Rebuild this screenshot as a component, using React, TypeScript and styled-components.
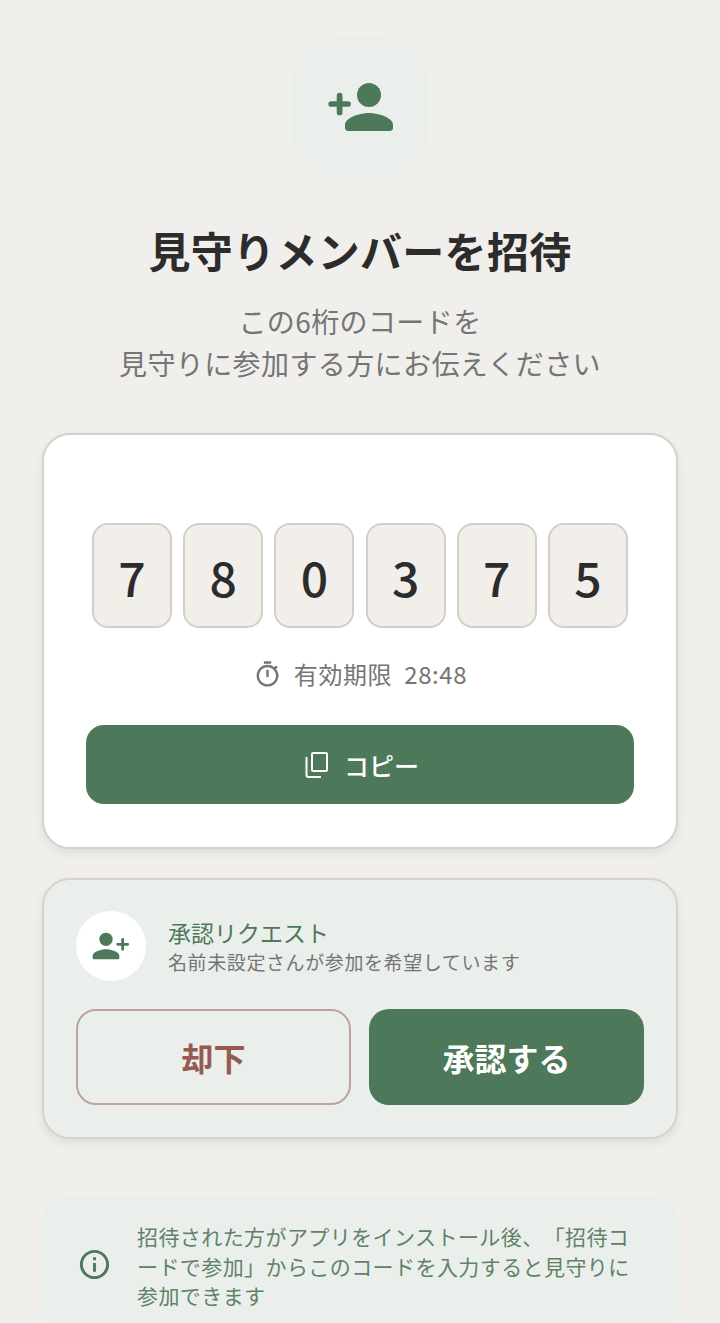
import styled, { createGlobalStyle } from "styled-components";

const GlobalStyle = createGlobalStyle`
  html, body {
    margin: 0;
    padding: 0;
    background: #f0efec;
  }
  * {
    box-sizing: border-box;
  }
`;

const Page = styled.main`
  width: 720px;
  height: 1323px;
  overflow: hidden;
  padding: 37px 42px 0;
  display: flex;
  flex-direction: column;
  align-items: center;
  background: #f0efec;
  font-family: "Noto Sans CJK JP", "Noto Sans", sans-serif;
  color: #2c2c2c;
  text-spacing-trim: space-all;
`;

const IconBadge = styled.div`
  flex: none;
  width: 136px;
  height: 140px;
  border-radius: 44px;
  background: #ebefec;
  display: flex;
  align-items: center;
  justify-content: center;
  color: #4d7859;
`;

const Title = styled.h1`
  margin: 43px 0 0;
  font-size: 42px;
  line-height: 60px;
  font-weight: 700;
  letter-spacing: 0.3px;
  color: #2c2c2c;
`;

const Lead = styled.p`
  margin: 20px 0 0;
  font-size: 28px;
  line-height: 42px;
  letter-spacing: 0.4px;
  text-align: center;
  color: #757575;
`;

const CodeCard = styled.section`
  flex: none;
  width: 636px;
  height: 416px;
  margin-top: 49px;
  padding: 88px 42px 0;
  background: #fff;
  border: 2px solid #d6d2cb;
  border-radius: 28px;
  box-shadow: 0 4px 10px rgba(0, 0, 0, 0.08);
  display: flex;
  flex-direction: column;
  align-items: center;
`;

const Digits = styled.div`
  display: flex;
  gap: 11.2px;
`;

const Digit = styled.div`
  width: 80px;
  height: 105px;
  background: #f2eee9;
  border: 2px solid #d3cfc8;
  border-radius: 16px;
  display: flex;
  align-items: center;
  justify-content: center;
  font-size: 48px;
  font-weight: 500;
  color: #2c2c2c;
`;

const Expiry = styled.div`
  margin-top: 24px;
  display: flex;
  align-items: center;
  gap: 12px;
  font-size: 24px;
  line-height: 44px;
  letter-spacing: 0.6px;
  color: #757575;
`;

const Countdown = styled.span``;

const CopyButton = styled.button`
  flex: none;
  margin-top: 29px;
  width: 548px;
  height: 79px;
  border: none;
  border-radius: 18px;
  background: #4d7859;
  color: #fff;
  font: inherit;
  font-size: 25px;
  font-weight: 500;
  display: flex;
  align-items: center;
  justify-content: center;
  gap: 13px;
`;

const RequestCard = styled.section`
  flex: none;
  width: 636px;
  height: 261px;
  margin-top: 29px;
  padding: 31px 32px;
  background: #ebefec;
  border: 2px solid #d6d2cb;
  border-radius: 28px;
  box-shadow: 0 4px 10px rgba(0, 0, 0, 0.08);
`;

const RequestHead = styled.div`
  display: flex;
  align-items: center;
  gap: 22px;
`;

const Avatar = styled.div`
  width: 70px;
  height: 70px;
  border-radius: 50%;
  background: #fff;
  color: #4d7859;
  display: flex;
  align-items: center;
  justify-content: center;
`;

const RequestTitle = styled.div`
  font-size: 23px;
  line-height: 32px;
  font-weight: 400;
  color: #4d7859;
`;

const RequestText = styled.div`
  font-size: 19px;
  line-height: 28px;
  letter-spacing: 0.6px;
  color: #757575;
`;

const Actions = styled.div`
  margin-top: 28px;
  display: grid;
  grid-template-columns: 1fr 1fr;
  gap: 18px;
`;

const ActionButton = styled.button<{ $primary?: boolean }>`
  height: 96px;
  border-radius: 20px;
  border: ${(p) => (p.$primary ? "none" : "2px solid #c0a29c")};
  background: ${(p) => (p.$primary ? "#4d7859" : "transparent")};
  color: ${(p) => (p.$primary ? "#fff" : "#955a50")};
  font: inherit;
  font-size: 32px;
  font-weight: 700;
`;

const Note = styled.aside`
  flex: none;
  width: 636px;
  margin-top: 58px;
  padding: 25px 35px;
  background: #ebefec;
  border-radius: 20px;
  display: flex;
  align-items: center;
  gap: 25px;
  color: #5f8269;
  font-size: 21px;
  line-height: 29.5px;
  letter-spacing: 0.42px;
`;

const NoteIcon = styled.span`
  flex: none;
  display: flex;
  margin-top: -4px;
  color: #4d7859;
`;

function PersonAddIcon({ size }: { size: number }) {
  return (
    <svg width={size} height={size} viewBox="0 0 24 24" fill="currentColor">
      <circle cx="15" cy="8" r="4" />
      <path d="M15 14c-2.67 0-8 1.34-8 4v1c0 .55.45 1 1 1h14c.55 0 1-.45 1-1v-1c0-2.66-5.33-4-8-4z" />
      <path d="M2.4 11H8M5.2 8.2v5.6" fill="none" stroke="currentColor" strokeWidth="1.9" strokeLinecap="round" />
    </svg>
  );
}

function PersonAddRightIcon({ size }: { size: number }) {
  return (
    <svg width={size} height={size} viewBox="0 0 24 24" fill="currentColor">
      <circle cx="9" cy="8" r="4" />
      <path d="M9 14c-2.67 0-8 1.34-8 4v1c0 .55.45 1 1 1h14c.55 0 1-.45 1-1v-1c0-2.66-5.33-4-8-4z" />
      <path d="M16 11h6M19 8v6" fill="none" stroke="currentColor" strokeWidth="1.7" strokeLinecap="round" />
    </svg>
  );
}

function TimerIcon() {
  return (
    <svg width="29" height="29" viewBox="0 0 24 24" fill="currentColor">
      <path d="M15 1H9v2h6V1zm-4 13h2V8h-2v6zm8.03-6.61l1.42-1.42c-.43-.51-.9-.99-1.41-1.41l-1.42 1.42A8.962 8.962 0 0 0 12 4c-4.97 0-9 4.03-9 9s4.02 9 9 9a8.994 8.994 0 0 0 7.03-14.61zM12 20c-3.87 0-7-3.13-7-7s3.13-7 7-7 7 3.13 7 7-3.13 7-7 7z" />
    </svg>
  );
}

function CopyIcon() {
  return (
    <svg width="30" height="30" viewBox="0 0 24 24" fill="none" stroke="currentColor" strokeWidth="1.6">
      <rect x="8.8" y="2.4" width="12" height="14.4" rx="0.8" />
      <path d="M4.4 5.6v14.4a1.6 1.6 0 0 0 1.6 1.6h10" />
    </svg>
  );
}

function InfoIcon() {
  return (
    <svg width="35" height="35" viewBox="0 0 24 24" fill="currentColor">
      <path d="M11 7h2v2h-2zm0 4h2v6h-2zm1-9C6.48 2 2 6.48 2 12s4.48 10 10 10 10-4.48 10-10S17.52 2 12 2zm0 18c-4.41 0-8-3.59-8-8s3.59-8 8-8 8 3.59 8 8-3.59 8-8 8z" />
    </svg>
  );
}

const code = ["7", "8", "0", "3", "7", "5"];

export default function App() {
  return (
    <>
      <GlobalStyle />
      <Page>
        <IconBadge>
          <PersonAddIcon size={72} />
        </IconBadge>
        <Title>見守りメンバーを招待</Title>
        <Lead>
          この6桁のコードを
          <br />
          見守りに参加する方にお伝えください
        </Lead>

        <CodeCard>
          <Digits>
            {code.map((digit, i) => (
              <Digit key={i}>{digit}</Digit>
            ))}
          </Digits>
          <Expiry>
            <TimerIcon />
            <span>有効期限</span>
            <Countdown>28:48</Countdown>
          </Expiry>
          <CopyButton>
            <CopyIcon />
            コピー
          </CopyButton>
        </CodeCard>

        <RequestCard>
          <RequestHead>
            <Avatar>
              <PersonAddRightIcon size={40} />
            </Avatar>
            <div>
              <RequestTitle>承認リクエスト</RequestTitle>
              <RequestText>名前未設定さんが参加を希望しています</RequestText>
            </div>
          </RequestHead>
          <Actions>
            <ActionButton>却下</ActionButton>
            <ActionButton $primary>承認する</ActionButton>
          </Actions>
        </RequestCard>

        <Note>
          <NoteIcon>
            <InfoIcon />
          </NoteIcon>
          <span>招待された方がアプリをインストール後、「招待コードで参加」からこのコードを入力すると見守りに参加できます</span>
        </Note>
      </Page>
    </>
  );
}
